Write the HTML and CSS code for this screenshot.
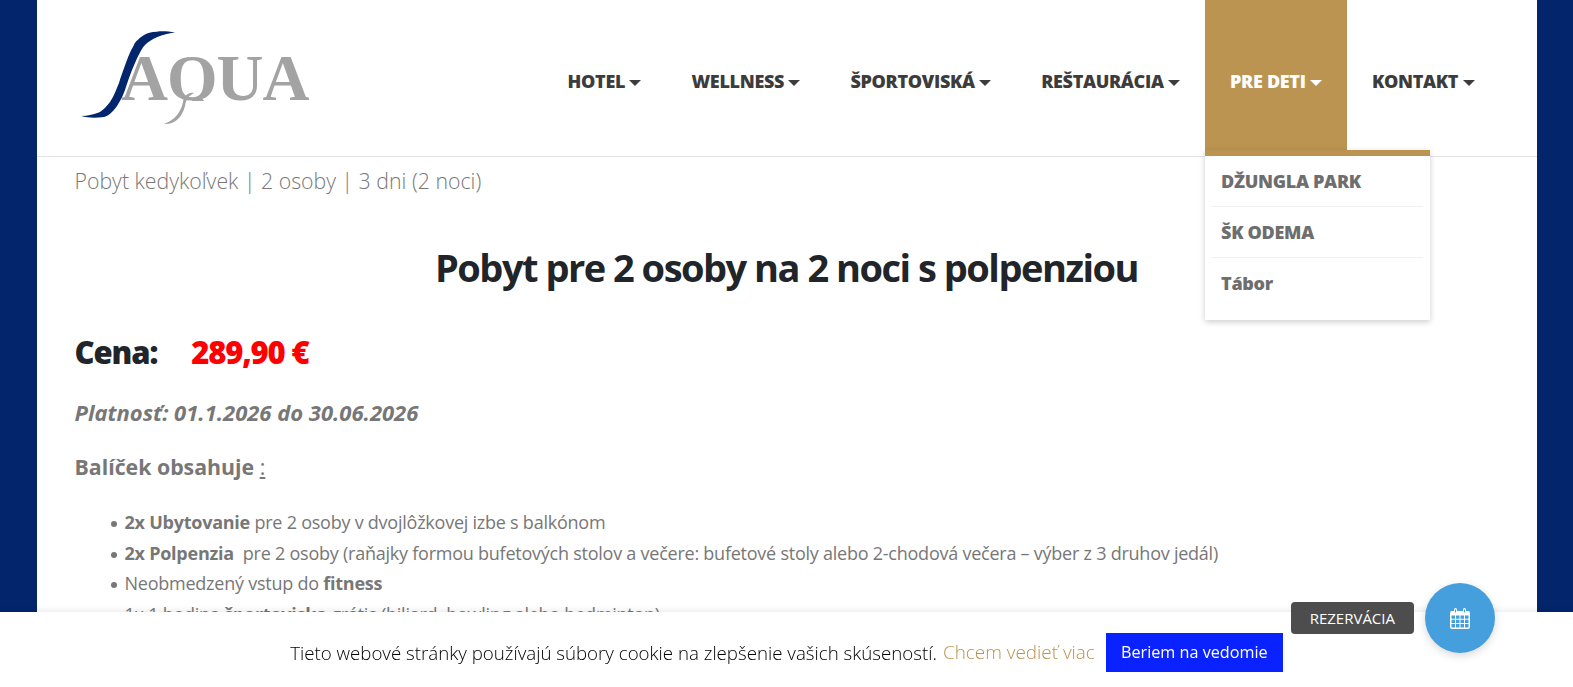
FILE: index.html
```html
<!DOCTYPE html>
<html lang="sk">
<head>
  <meta charset="UTF-8" />
  <meta name="viewport" content="width=device-width, initial-scale=1.0" />
  <title>Pobyt pre 2 osoby na 2 noci s polpenziou</title>
  <link rel="stylesheet" href="styles.css">
</head>
<body>
  <div class="page">
    <header class="site-header">
      <a class="logo" href="#">
        <svg width="240" height="100" viewBox="0 0 240 100">
          <clipPath id="logo-clip"><rect width="240" height="71"/></clipPath>
          <text class="logo-text" x="41" y="70" clip-path="url(#logo-clip)">AQUA</text>
          <path fill="#a3a3a3" d="M114 63C108 62 104 66 103 72 101 82 95 90 84 94 94 95 102 88 105 76 106 70 108 66 114 63Z"/>
          <path fill="#03256c" d="M1 86C8 88 16 88 24 87 33 85 41 71 45 60 49 48 51 42 55 33 59 24 62 18 65 15 71 9 82 4 95 2.500 88 1 80 1 77 1.700 71 2 67 3 64 5 58 9 55 12 54 15 50 22 49 25 47 30 44 38 41 46 39 53 36 60 34 66 30 72 27 76 24 79 20 82 15 84 8 86 1 86Z"/>
        </svg>
      </a>
      <nav class="main-nav">
        <a class="nav-item" href="#">HOTEL <span class="caret"></span></a>
        <a class="nav-item" href="#">WELLNESS <span class="caret"></span></a>
        <a class="nav-item" href="#">ŠPORTOVISKÁ <span class="caret"></span></a>
        <a class="nav-item" href="#">REŠTAURÁCIA <span class="caret"></span></a>
        <div class="nav-drop">
          <a class="nav-item active" href="#">PRE DETI <span class="caret"></span></a>
          <ul class="dropdown">
            <li><a href="#">DŽUNGLA PARK</a></li>
            <li><a href="#">ŠK ODEMA</a></li>
            <li><a href="#">Tábor</a></li>
          </ul>
        </div>
        <a class="nav-item" href="#">KONTAKT <span class="caret"></span></a>
      </nav>
    </header>

    <main class="content">
      <p class="subtitle">Pobyt kedykoľvek | 2 osoby | 3 dni (2 noci)</p>
      <h1>Pobyt pre 2 osoby na 2 noci s polpenziou</h1>
      <h2 class="price">Cena: <span class="price-value">289,90 €</span></h2>
      <p class="validity">Platnosť: 01.1.2026 do 30.06.2026</p>
      <p class="package">Balíček obsahuje <u>:</u></p>
      <ul class="items">
        <li><b>2x Ubytovanie</b> pre 2 osoby v dvojlôžkovej izbe s balkónom</li>
        <li><b>2x Polpenzia</b>&nbsp; pre 2 osoby (raňajky formou bufetových stolov a večere: bufetové stoly alebo 2-chodová večera – výber z 3 druhov jedál)</li>
        <li>Neobmedzený vstup do <b>fitness</b></li>
        <li>1x 1 hodina <b>športoviska</b> grátis (biliard, bowling alebo bedminton)</li>
      </ul>
    </main>
  </div>

  <div class="cookie-bar">
    <span>Tieto webové stránky používajú súbory cookie na zlepšenie vašich skúseností.</span>
    <a class="cookie-more" href="#">Chcem vedieť viac</a>
    <button class="cookie-ok">Beriem na vedomie</button>
  </div>

  <div class="booking">
    <span class="booking-label">REZERVÁCIA</span>
    <a class="booking-btn" href="#">
      <svg width="20" height="21" viewBox="0 0 20 21">
        <path fill="#fff" fill-rule="evenodd" d="M4 3V1.500a1.500 1.500 0 0 1 3 0V3h6V1.500a1.500 1.500 0 0 1 3 0V3h2a2 2 0 0 1 2 2v14a2 2 0 0 1-2 2H2a2 2 0 0 1-2-2V5a2 2 0 0 1 2-2zM5 1.500V4.500h1V1.500zM14 1.500V4.500h1V1.500zM1.500 7.500v3.300h3.500V7.500zM6 7.500v3.300h3.500V7.500zM10.500 7.500v3.300h3.500V7.500zM15 7.500v3.300h3.500V7.500zM1.500 11.700v3.300h3.500v-3.300zM6 11.700v3.300h3.500v-3.300zM10.500 11.700v3.300h3.500v-3.300zM15 11.700v3.300h3.500v-3.300zM1.500 16v3.500h3.500V16zM6 16v3.500h3.500V16zM10.500 16v3.500h3.500V16zM15 16v3.500h3.500V16z"/>
      </svg>
    </a>
  </div>
</body>
</html>
```
FILE: styles.css
```css
html, body {
  height: 100%;
  overflow: hidden;
}

body {
  margin: 0;
  background-color: #03256c;
  font-family: "Open Sans", sans-serif;
  color: #777;
}

a {
  text-decoration: none;
}

.page {
  width: 1500px;
  margin: 0 auto;
  background-color: #fff;
  min-height: 100%;
}

.site-header {
  display: flex;
  justify-content: space-between;
  height: 156px;
  border-bottom: 1px solid #e4e4e4;
  padding-left: 43px;
  padding-right: 37px;
}

.logo {
  padding-top: 30px;
}

.logo-text {
  font-family: "Liberation Serif", serif;
  font-size: 65px;
  font-weight: bold;
  letter-spacing: -1px;
  fill: #a3a3a3;
}

.main-nav {
  display: flex;
  position: relative;
}

.nav-item {
  display: block;
  height: 156px;
  padding: 69px 25px 0;
  box-sizing: border-box;
  font-size: 18px;
  line-height: 24px;
  font-weight: 800;
  color: #3c3c3c;
  white-space: nowrap;
  letter-spacing: -0.32px;
}

.caret {
  display: inline-block;
  width: 0;
  height: 0;
  vertical-align: middle;
  border-top: 6px solid currentColor;
  border-left: 6px solid transparent;
  border-right: 6px solid transparent;
}

.nav-drop {
  position: relative;
}

.nav-item.active {
  background-color: #ba9450;
  color: #fff;
}

.dropdown {
  position: absolute;
  top: 150px;
  left: 0;
  width: 225px;
  height: 170px;
  margin: 0;
  padding: 0 7px;
  box-sizing: border-box;
  list-style: none;
  border-top: 6px solid #ba9450;
  background-color: #fff;
  box-shadow: 0 2px 6px rgba(0, 0, 0, 0.2);
}

.dropdown li {
  height: 51px;
  border-bottom: 1px solid #f0f0f0;
  box-sizing: border-box;
}

.dropdown li:last-child {
  border-bottom: none;
}

.dropdown a {
  display: block;
  padding: 12px 9px 0;
  font-size: 18px;
  line-height: 26px;
  font-weight: 800;
  letter-spacing: -0.3px;
  color: #6e6e6e;
}

.content {
  padding: 0 38px;
}

.subtitle {
  margin: 0;
  padding-top: 9px;
  font-size: 21.300px;
  line-height: 30px;
  font-weight: 300;
}

h1 {
  margin: 46px 0 0;
  text-align: center;
  font-size: 38px;
  line-height: 50px;
  font-weight: 700;
  letter-spacing: -1.500px;
  color: #212529;
}

.price {
  display: flex;
  gap: 34px;
  margin: 37px 0 0;
  font-size: 31px;
  line-height: 46px;
  font-weight: 800;
  letter-spacing: -1.100px;
  color: #212529;
}

.price-value {
  color: #f00;
  font-weight: 800;
  letter-spacing: -1.200px;
}

.validity {
  margin: 22px 0 0;
  font-size: 22px;
  line-height: 30px;
  font-weight: 700;
  font-style: italic;
}

.package {
  margin: 25px 0 0;
  font-size: 21.300px;
  line-height: 30px;
  font-weight: 700;
}

.package u {
  font-weight: 400;
}

.items {
  margin: 25px 0 0;
  padding-left: 50px;
  list-style: none;
  font-size: 18px;
  line-height: 30.500px;
  letter-spacing: -0.24px;
}

.items li::before {
  content: "";
  display: inline-block;
  width: 6px;
  height: 6px;
  margin-left: -14px;
  margin-right: 8px;
  border-radius: 50%;
  background-color: #777;
  vertical-align: 2px;
}

.cookie-bar {
  position: fixed;
  left: 0;
  right: 0;
  bottom: 0;
  display: flex;
  justify-content: center;
  align-items: center;
  gap: 6px;
  height: 75px;
  padding-top: 5px;
  box-sizing: border-box;
  background-color: #fff;
  box-shadow: 0 -2px 6px rgba(0, 0, 0, 0.08);
  font-size: 18.700px;
  font-weight: 300;
  color: #000;
}

.cookie-more {
  font-size: 18.900px;
  color: #ba9450;
}

.cookie-ok {
  margin-left: 5px;
  width: 177px;
  height: 39px;
  border: none;
  background-color: #0a22ff;
  color: #fff;
  font-family: "Open Sans", sans-serif;
  font-size: 16.200px;
}

.booking {
  position: fixed;
  right: 78px;
  bottom: 34px;
  display: flex;
  align-items: center;
  gap: 11px;
}

.booking-label {
  padding: 0 19px;
  height: 32px;
  line-height: 32px;
  border-radius: 4px;
  background-color: #4d4d4d;
  color: #fff;
  font-size: 15px;
}

.booking-btn {
  display: flex;
  justify-content: center;
  align-items: center;
  width: 70px;
  height: 70px;
  border-radius: 50%;
  background-color: #459fdc;
  box-shadow: 0 3px 8px rgba(0, 0, 0, 0.15);
}
```
